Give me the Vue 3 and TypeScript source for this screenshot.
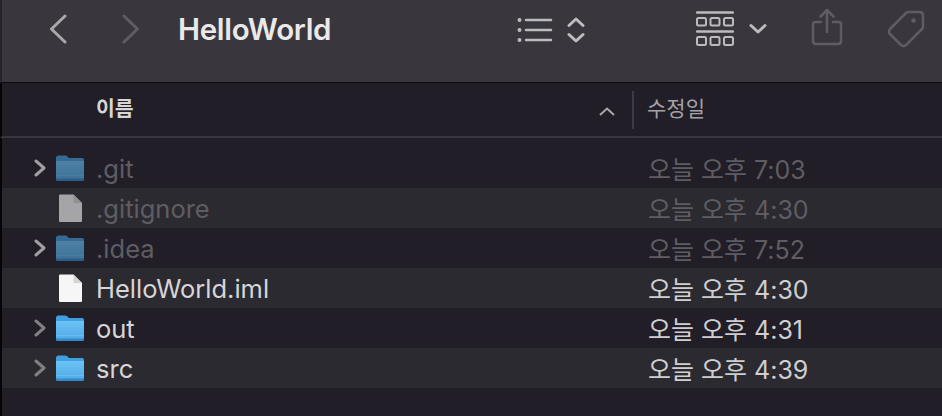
<script setup lang="ts">
interface Row {
  name: string;
  date: string;
  kind: "folder" | "file";
  hidden?: boolean;
}

const rows: Row[] = [
  { name: ".git", date: "오늘 오후 7:03", kind: "folder", hidden: true },
  { name: ".gitignore", date: "오늘 오후 4:30", kind: "file", hidden: true },
  { name: ".idea", date: "오늘 오후 7:52", kind: "folder", hidden: true },
  { name: "HelloWorld.iml", date: "오늘 오후 4:30", kind: "file" },
  { name: "out", date: "오늘 오후 4:31", kind: "folder" },
  { name: "src", date: "오늘 오후 4:39", kind: "folder" },
];
</script>

<template>
  <div class="finder">
    <header class="toolbar">
      <div class="nav">
        <svg class="back" width="20" height="30" viewBox="0 0 20 30">
          <path d="M17 2 L3.5 15 L17 28" />
        </svg>
        <svg class="forward" width="20" height="30" viewBox="0 0 20 30">
          <path d="M3 2 L16.5 15 L3 28" />
        </svg>
      </div>
      <h1 class="title">HelloWorld</h1>
      <div class="view-list">
        <svg width="36" height="26" viewBox="0 0 36 26">
          <circle cx="2.5" cy="3" r="2" />
          <circle cx="2.5" cy="13" r="2" />
          <circle cx="2.5" cy="23" r="2" />
          <path class="line" d="M9 3 H34 M9 13 H34 M9 23 H34" />
        </svg>
        <svg width="18" height="28" viewBox="0 0 18 28">
          <path class="chev" d="M2 9.500 L9 3 L16 9.500 M2 18.500 L9 25 L16 18.500" />
        </svg>
      </div>
      <div class="view-group">
        <svg width="38" height="36" viewBox="0 0 38 36">
          <path class="line" d="M1 1.500 H37 M1 20.500 H37" />
          <rect class="cell" x="1" y="7" width="9" height="7.500" rx="1.500" />
          <rect class="cell" x="14.500" y="7" width="9" height="7.500" rx="1.500" />
          <rect class="cell" x="28" y="7" width="9" height="7.500" rx="1.500" />
          <rect class="cell" x="1" y="26" width="9" height="8" rx="1.500" />
          <rect class="cell" x="14.500" y="26" width="9" height="8" rx="1.500" />
          <rect class="cell" x="28" y="26" width="9" height="8" rx="1.500" />
        </svg>
        <svg width="18" height="12" viewBox="0 0 18 12">
          <path class="chev" d="M2 2.500 L9 9 L16 2.500" />
        </svg>
      </div>
      <svg class="share" width="32" height="38" viewBox="0 0 32 38">
        <path d="M10 14 H4.500 Q2 14 2 16.500 V33 Q2 36 5 36 H27 Q30 36 30 33 V16.500 Q30 14 27.500 14 H22 M16 24 V2 M9.500 8.500 L16 2 L22.500 8.500" />
      </svg>
      <svg class="tag" width="38" height="38" viewBox="0 0 38 38">
        <path d="M21.500 2 H32.500 Q36 2 36 5.500 V16.500 Q36 18 35 19 L19 35 Q16.500 37 14 35 L3 24 Q1 21.500 3 19 L19 3 Q20 2 21.500 2 Z" />
        <circle class="dot" cx="26.500" cy="10.500" r="2.200" />
      </svg>
    </header>

    <div class="columns">
      <div class="col-name">
        <span class="col-label">이름</span>
        <svg width="16" height="9" viewBox="0 0 16 9">
          <path d="M1 8 L8 1.500 L15 8" />
        </svg>
      </div>
      <div class="col-date">수정일</div>
    </div>

    <ul class="list">
      <li v-for="row in rows" :key="row.name" class="row" :class="{ hidden: row.hidden }">
        <svg v-if="row.kind === 'folder'" class="disclosure" width="12" height="18" viewBox="0 0 12 18">
          <path d="M2 2 L10 9 L2 16" />
        </svg>
        <span v-else class="disclosure"></span>
        <svg v-if="row.kind === 'folder'" class="icon" width="28" height="26" viewBox="0 0 28 26">
          <defs>
            <linearGradient id="folder-fill" x1="0" y1="0" x2="0" y2="1">
              <stop offset="0" stop-color="#6cc2f5" />
              <stop offset="1" stop-color="#4ea9e6" />
            </linearGradient>
          </defs>
          <path class="folder-back" d="M0 3 Q0 0.500 2.500 0.500 H9.500 Q11 0.500 12 2 L12.800 3 H26 Q28 3 28 5 V10 H0 Z" />
          <path class="folder-front" fill="url(#folder-fill)" d="M0 6 H28 V24 Q28 26 26 26 H2 Q0 26 0 24 Z" />
          <path class="folder-band" d="M0 20 H28 V21 H0 Z" />
          <path class="folder-shade" d="M0 23.500 H28 V24 Q28 26 26 26 H2 Q0 26 0 24 Z" />
        </svg>
        <svg v-else class="icon" width="28" height="28" viewBox="0 0 28 28">
          <path class="page" d="M3 1.500 Q3 0.500 4 0.500 H17.500 L26 9 V27 Q26 28 25 28 H4 Q3 28 3 27 Z" />
          <path class="page-fold" d="M17.500 0.500 V8 Q17.500 9 18.500 9 H26 Z" />
        </svg>
        <span class="name">{{ row.name }}</span>
        <span class="date">{{ row.date }}</span>
      </li>
    </ul>
  </div>
</template>

<style>
html,
body {
  margin: 0;
  background: #211e27;
}
</style>

<style scoped>
.finder {
  width: 942px;
  height: 416px;
  overflow: hidden;
  background: #211e27;
  font-family: Inter, "Noto Sans CJK KR", sans-serif;
  display: flex;
  flex-direction: column;
}
.toolbar {
  height: 83px;
  box-sizing: border-box;
  background: #39373d;
  border-left: 2px solid #26242a;
  border-bottom: 1px solid #0c0b0d;
  display: flex;
  align-items: flex-start;
  flex-shrink: 0;
}
.toolbar svg {
  fill: none;
  stroke-linecap: round;
  stroke-linejoin: round;
}
.nav {
  display: flex;
  gap: 53px;
  margin: 14px 0 0 46px;
}
.nav path {
  stroke-width: 3;
}
.back {
  stroke: #a9a8ab;
}
.forward {
  stroke: #5f5d63;
}
.title {
  margin: 11px 0 0 37px;
  font-size: 29.5px;
  line-height: 36px;
  font-weight: 600;
  color: #e9e9ea;
  letter-spacing: -0.3px;
  width: 339px;
}
.view-list {
  display: flex;
  align-items: center;
  gap: 14px;
  margin-top: 16px;
  width: 178px;
}
.view-list circle {
  fill: #bcbbbe;
}
.line {
  stroke: #bcbbbe;
  stroke-width: 2.500;
}
.chev {
  stroke: #bcbbbe;
  stroke-width: 3;
}
.view-group {
  display: flex;
  align-items: center;
  gap: 15px;
  margin-top: 11px;
  width: 113px;
  padding-left: 1px;
}
.cell {
  stroke: #bcbbbe;
  stroke-width: 2;
}
.share {
  margin: 8px 0 0 2px;
  stroke: #5f5d63;
  stroke-width: 2.500;
}
.tag {
  margin: 10px 0 0 44px;
  stroke: #5f5d63;
  stroke-width: 2.500;
}
.tag .dot {
  fill: #5f5d63;
  stroke: none;
}
.columns {
  height: 55px;
  box-sizing: border-box;
  border-left: 2px solid #050506;
  border-bottom: 2px solid #38353e;
  display: flex;
  align-items: center;
  flex-shrink: 0;
}
.col-name {
  width: 632px;
  height: 38px;
  box-sizing: border-box;
  padding: 0 17px 0 94px;
  border-right: 2px solid #3d3a43;
  display: flex;
  align-items: center;
  justify-content: space-between;
  font-size: 20.5px;
  font-weight: 600;
  color: #d6d5d8;
}
.col-label {
  margin-top: -5px;
}
.col-name svg {
  fill: none;
  stroke: #a9a8ab;
  stroke-width: 2;
  margin-top: 4px;
}
.col-date {
  padding: 0 0 5px 13px;
  font-size: 21px;
  color: #a3a2a6;
}
.list {
  list-style: none;
  margin: 0;
  padding: 10px 0 0;
  flex: 1;
  border-left: 2px solid #050506;
}
.row {
  height: 40px;
  display: flex;
  align-items: center;
  font-size: 25px;
  color: #d6d5d8;
}
.row:nth-child(even) {
  background: #2b2a31;
}
.disclosure {
  width: 12px;
  height: 18px;
  margin-left: 32px;
  fill: none;
  stroke: #807f84;
  stroke-width: 3;
  stroke-linecap: round;
  stroke-linejoin: round;
}
.icon {
  margin-left: 10px;
}
.folder-back {
  fill: #3f9fe0;
}
.folder-band {
  fill: #7cc8f4;
  opacity: 0.5;
}
.folder-shade {
  fill: #3488c8;
}
.page {
  fill: #f6f6f6;
}
.page-fold {
  fill: #d4d4d5;
}
.name {
  margin-left: 12px;
  width: 552px;
  font-size: 25.500px;
}
.date {
  white-space: pre;
  color: #cfced1;
}
.row.hidden .name,
.row.hidden .date {
  color: #5f5d63;
}
.row.hidden .icon {
  opacity: 0.6;
}
.row.hidden .disclosure {
  stroke: #a09fa3;
}
</style>
